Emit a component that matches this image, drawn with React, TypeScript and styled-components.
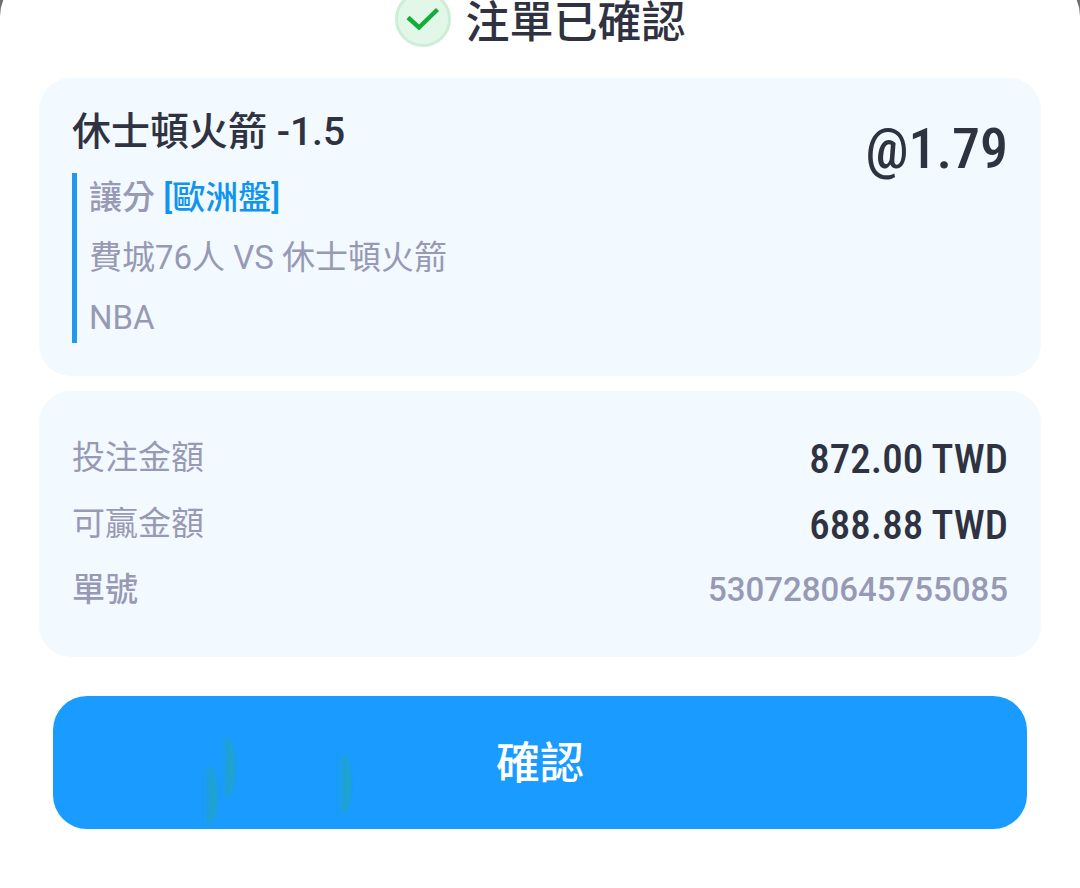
import React from 'react';
import styled, { createGlobalStyle } from 'styled-components';

const sans = "Roboto, 'Noto Sans CJK TC', sans-serif";
const narrow = "'Roboto Condensed', 'Liberation Sans Narrow', 'DejaVu Sans Condensed', sans-serif";

const ink = '#2f3241';
const muted = '#9899b5';
const blue = '#1a9bff';

const GlobalStyle = createGlobalStyle`
  * { box-sizing: border-box; }
  body {
    margin: 0;
    background: #6f6f6f;
    color: ${ink};
    font-family: ${sans};
    overflow: hidden;
  }
  h1, h2, p, dl, dt, dd { margin: 0; }
`;

const Sheet = styled.main`
  display: flow-root;
  min-height: calc(100vh + 24px);
  margin-top: -24px;
  padding: 15px 39px 32px;
  border-radius: 40px 40px 0 0;
  background: #fff;
`;

const Header = styled.header`
  display: flex;
  align-items: center;
  justify-content: center;
  gap: 15px;
  height: 56px;
  margin-bottom: 31px;
`;

const Title = styled.h1`
  padding-top: 8px;
  font-size: 44px;
  line-height: 48px;
  font-weight: 500;
`;

const Card = styled.section`
  padding: 33px;
  border-radius: 32px;
  background: #f2f9ff;
  margin-bottom: 15px;
`;

const BetCard = styled(Card)`
  display: flex;
  justify-content: space-between;
  align-items: flex-start;
`;

const Selection = styled.h2`
  font-size: 39px;
  line-height: 40px;
  font-weight: 500;
  padding-top: 1px;
  margin-bottom: 21px;
`;

const Details = styled.div`
  display: grid;
  gap: 10px;
  padding-left: 12px;
  border-left: 5px solid #2498ef;
`;

const Detail = styled.p<{ $strong?: boolean }>`
  font-size: 33px;
  line-height: 50px;
  font-weight: ${(p) => (p.$strong ? 500 : 400)};
  color: ${muted};
`;

const Market = styled.span`
  color: #0f94ef;
`;

const Odds = styled.strong`
  font-family: ${narrow};
  font-size: 56px;
  line-height: 76px;
  font-weight: 500;
`;

const Summary = styled(Card).attrs({ as: 'dl' })`
  padding-bottom: 35px;
  margin-bottom: 39px;
`;

const Row = styled.div`
  display: flex;
  justify-content: space-between;
  align-items: center;
  height: 66px;
`;

const Label = styled.dt<{ $strong?: boolean }>`
  padding-bottom: 4px;
  font-size: 33px;
  font-weight: ${(p) => (p.$strong ? 500 : 400)};
  color: ${muted};
`;

const Amount = styled.dd`
  padding-top: 4px;
  font-family: ${narrow};
  font-size: 41px;
  font-weight: 500;
`;

const TicketNumber = styled.dd`
  font-size: 33px;
  font-weight: 500;
  color: ${muted};
`;

const ConfirmButton = styled.button`
  position: relative;
  display: block;
  width: calc(100% - 28px);
  height: 133px;
  margin: 0 14px;
  padding: 0 0 6px;
  border: 0;
  border-radius: 34px;
  background: ${blue};
  color: #fff;
  font-family: ${sans};
  font-size: 44px;
  font-weight: 500;
  overflow: hidden;
`;

const Glints = styled.svg`
  position: absolute;
  left: 140px;
  top: 32px;
`;

const CheckIcon = () => (
  <svg width="56" height="56" viewBox="0 0 56 56" aria-hidden="true">
    <circle cx="28" cy="28" r="26.5" fill="#e3f7e9" stroke="#cdeed6" strokeWidth="3" />
    <path d="M13 26.5 L24 36.5 L42.5 18.5" fill="none" stroke="#14ad3a" strokeWidth="4.4" />
  </svg>
);

const glintPath = 'M0 0 H9 Q14 14 14 30 Q14 46 9 58 H0 Z';

export default function App() {
  return (
    <>
      <GlobalStyle />
      <Sheet>
        <Header>
          <CheckIcon />
          <Title>注單已確認</Title>
        </Header>
        <BetCard>
          <div>
            <Selection>休士頓火箭 -1.5</Selection>
            <Details>
              <Detail $strong>
                讓分 <Market>[歐洲盤]</Market>
              </Detail>
              <Detail>費城76人 VS 休士頓火箭</Detail>
              <Detail>NBA</Detail>
            </Details>
          </div>
          <Odds>@1.79</Odds>
        </BetCard>
        <Summary>
          <Row>
            <Label>投注金額</Label>
            <Amount>872.00 TWD</Amount>
          </Row>
          <Row>
            <Label>可贏金額</Label>
            <Amount>688.88 TWD</Amount>
          </Row>
          <Row>
            <Label $strong>單號</Label>
            <TicketNumber>5307280645755085</TicketNumber>
          </Row>
        </Summary>
        <ConfirmButton type="button">
          <Glints width="170" height="101" viewBox="0 0 170 101" aria-hidden="true">
            <defs>
              <linearGradient id="glint">
                <stop offset="0" stopColor="#1fa4c4" stopOpacity="0" />
                <stop offset="0.6" stopColor="#1fa4c4" stopOpacity="0.8" />
                <stop offset="1" stopColor="#1fa4c4" />
              </linearGradient>
              <filter id="soft" x="-50%" y="-20%" width="200%" height="140%">
                <feGaussianBlur stdDeviation="1.5" />
              </filter>
            </defs>
            <g fill="url(#glint)" filter="url(#soft)">
              <path d={glintPath} transform="translate(10 39)" />
              <path d={glintPath} transform="translate(28 10)" />
              <path d={glintPath} transform="translate(144 27)" />
            </g>
          </Glints>
          確認
        </ConfirmButton>
      </Sheet>
    </>
  );
}
